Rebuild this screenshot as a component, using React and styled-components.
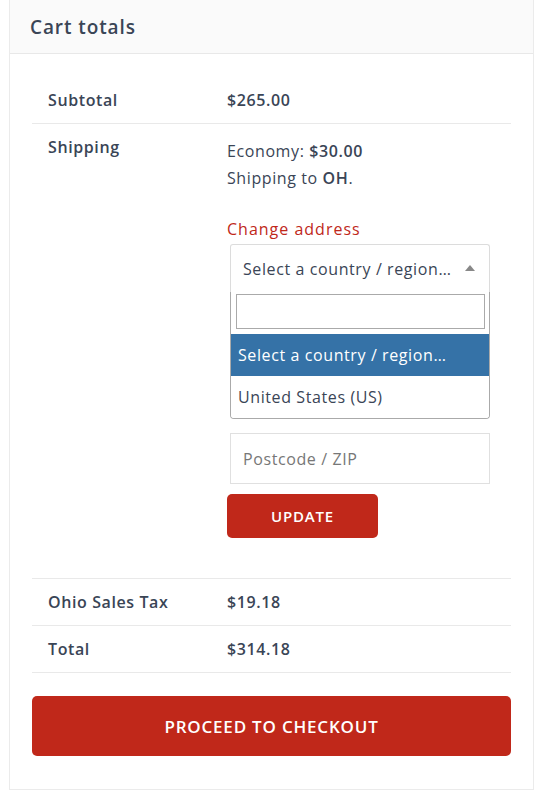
import React from "react";
import styled, { createGlobalStyle } from "styled-components";

const GlobalStyle = createGlobalStyle`
  html, body {
    margin: 0;
    padding: 0;
    background: #fff;
  }
  body {
    font-family: "Open Sans", "Liberation Sans", sans-serif;
    color: #3a4556;
    letter-spacing: 0.6px;
  }
  * {
    box-sizing: border-box;
  }
`;

const Page = styled.div`
  padding: 0 18px 10px 9px;
`;

const Card = styled.section`
  border: 1px solid #ebebeb;
  border-top: 0;
  background: #fff;
`;

const Header = styled.h2`
  margin: 0;
  height: 54px;
  padding: 0 20px;
  display: flex;
  align-items: center;
  background: #fafafa;
  border-bottom: 1px solid #e8e8e8;
  font-size: 19px;
  font-weight: 600;
  letter-spacing: 0.9px;
  color: #3a4556;
`;

const Body = styled.div`
  padding: 23px 22px 33px 22px;
`;

const Row = styled.div`
  display: grid;
  grid-template-columns: 179px 1fr;
  border-bottom: 1px solid #e9e9e9;
  padding: 11px 0;
  padding-bottom: ${(p) => p.$bottom || 11}px;
  font-size: 16px;
  line-height: 24px;
`;

const Label = styled.div`
  padding: 0 16px;
  font-weight: 600;
`;

const Value = styled.div`
  padding: 0 16px;
  font-weight: ${(p) => (p.$bold ? 600 : 400)};
`;

const Methods = styled.ul`
  list-style: none;
  margin: 3px 0 0;
  padding: 0;
  line-height: 27px;

  strong {
    font-weight: 600;
  }
`;

const ChangeLink = styled.a`
  display: block;
  margin-top: 25px;
  color: #c0281a;
  text-decoration: none;
  line-height: 24px;
  letter-spacing: 1px;
`;

const Form = styled.div`
  margin: 3px 0 0 3px;
  width: 260px;
`;

const SelectBox = styled.div`
  height: 48px;
  display: flex;
  align-items: center;
  justify-content: space-between;
  padding: 0 14px 0 12px;
  border: 1px solid #dcdcdc;
  border-bottom: 0;
  border-radius: 3px 3px 0 0;
  color: #3a4556;
  white-space: nowrap;
`;

const Arrow = styled.span`
  flex: none;
  width: 0;
  height: 0;
  border-left: 5px solid transparent;
  border-right: 5px solid transparent;
  border-bottom: 6px solid #888;
  margin-top: -2px;
`;

const Dropdown = styled.div`
  border: 1px solid #aaa;
  border-top: 0;
  border-radius: 0 0 4px 4px;
  overflow: hidden;
`;

const SearchWrap = styled.div`
  padding: 2px 4px 5px 5px;
`;

const Search = styled.input`
  display: block;
  width: 100%;
  height: 35px;
  border: 1px solid #aaa;
  outline: none;
  font: inherit;
`;

const Option = styled.div`
  height: 42px;
  display: flex;
  align-items: center;
  padding: 0 7px;
  white-space: nowrap;
  background: ${(p) => (p.$active ? "#3572a7" : "#fff")};
  color: ${(p) => (p.$active ? "#fff" : "#3a4556")};
`;

const Input = styled.input`
  display: block;
  width: 100%;
  height: 51px;
  margin-top: 14px;
  padding: 0 12px;
  border: 1px solid #e0e0e0;
  font: inherit;
  font-size: 16px;
  letter-spacing: 0.6px;
  color: #3a4556;
  outline: none;

  &::placeholder {
    color: #777;
  }
`;

const Button = styled.button`
  display: flex;
  align-items: center;
  justify-content: center;
  width: ${(p) => (p.$wide ? "100%" : "151px")};
  height: ${(p) => (p.$wide ? 60 : 44)}px;
  margin: ${(p) => (p.$wide ? "23px 0 0" : "10px 0 0 -3px")};
  border: 0;
  border-radius: 5px;
  background: #c0281a;
  color: #fff;
  font-family: inherit;
  font-size: ${(p) => (p.$wide ? 17 : 15)}px;
  font-weight: 600;
  letter-spacing: 0.8px;
  text-transform: uppercase;
  cursor: pointer;
`;

export default function App() {
  return (
    <Page>
      <GlobalStyle />
      <Card>
        <Header>Cart totals</Header>
        <Body>
          <Row>
            <Label>Subtotal</Label>
            <Value $bold>$265.00</Value>
          </Row>
          <Row $bottom={40}>
            <Label>Shipping</Label>
            <Value>
              <Methods>
                <li>
                  Economy: <strong>$30.00</strong>
                </li>
                <li>
                  Shipping to <strong>OH</strong>.
                </li>
              </Methods>
              <ChangeLink href="#">Change address</ChangeLink>
              <Form>
                <SelectBox>
                  <span>Select a country / region…</span>
                  <Arrow />
                </SelectBox>
                <Dropdown>
                  <SearchWrap>
                    <Search type="text" />
                  </SearchWrap>
                  <Option $active>Select a country / region…</Option>
                  <Option>United States (US)</Option>
                </Dropdown>
                <Input placeholder="Postcode / ZIP" />
                <Button>Update</Button>
              </Form>
            </Value>
          </Row>
          <Row>
            <Label>Ohio Sales Tax</Label>
            <Value $bold>$19.18</Value>
          </Row>
          <Row>
            <Label>Total</Label>
            <Value $bold>$314.18</Value>
          </Row>
          <Button $wide>Proceed to checkout</Button>
        </Body>
      </Card>
    </Page>
  );
}
